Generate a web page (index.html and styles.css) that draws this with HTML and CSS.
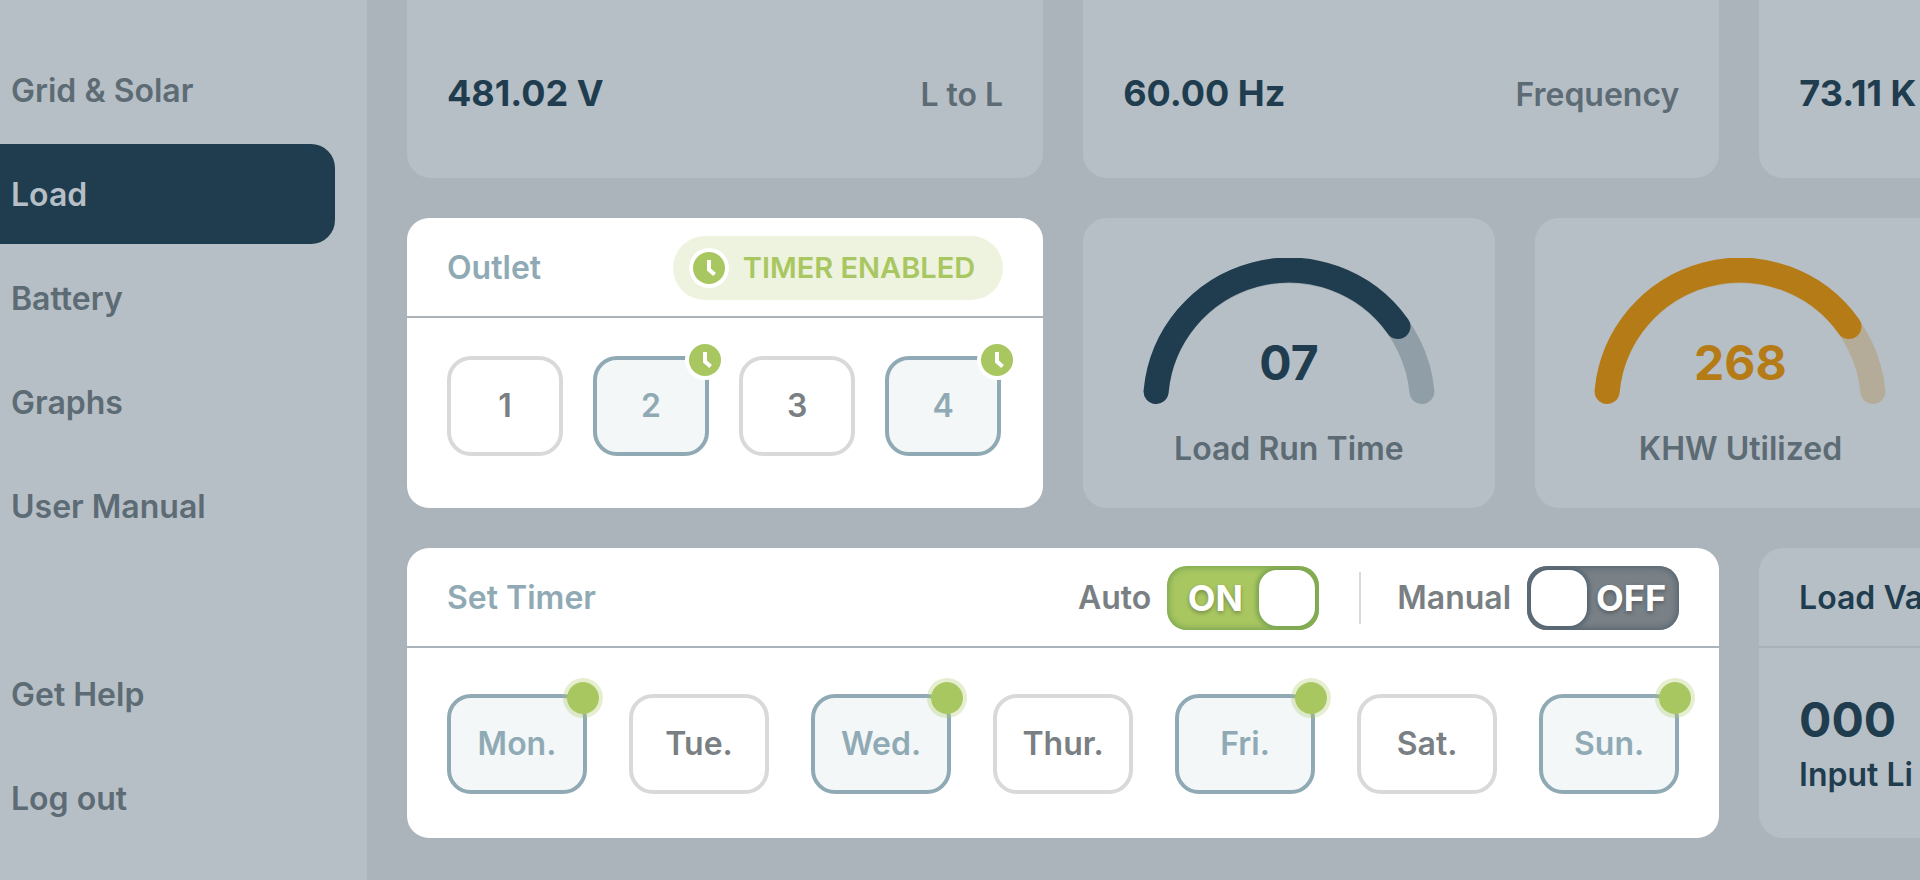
FILE: index.html
```html
<!DOCTYPE html>
<html lang="en">
<head>
    <meta charset="UTF-8">
    <meta name="viewport" content="width=device-width, initial-scale=1.0">
    <title>Load</title>
    <link rel="stylesheet" href="styles.css">
</head>
<body>
    <aside class="sidebar">
        <nav class="menu">
            <a class="menu-item" href="#">Grid &amp; Solar</a>
            <a class="menu-item active" href="#">Load</a>
            <a class="menu-item" href="#">Battery</a>
            <a class="menu-item" href="#">Graphs</a>
            <a class="menu-item" href="#">User Manual</a>
        </nav>
        <nav class="menu">
            <a class="menu-item" href="#">Get Help</a>
            <a class="menu-item" href="#">Log out</a>
        </nav>
    </aside>

    <main class="main">
        <div class="board">
            <!-- meters -->
            <div class="row">
                <section class="card meter">
                    <span class="meter-value">481.02 V</span>
                    <span class="meter-name">L to L</span>
                </section>
                <section class="card meter">
                    <span class="meter-value">60.00 Hz</span>
                    <span class="meter-name">Frequency</span>
                </section>
                <section class="card meter">
                    <span class="meter-value">73.11 K</span>
                </section>
            </div>

            <!-- outlets and gauges -->
            <div class="row">
                <section class="card focus">
                    <header class="card-header">
                        <h2 class="card-title">Outlet</h2>
                        <span class="pill">
                            <svg class="clock" viewBox="0 0 40 40">
                                <circle cx="20" cy="20" r="20" fill="#fff"/>
                                <circle cx="20" cy="20" r="16" fill="#a9c761"/>
                                <path d="M20 12v9.5l5.6 5" fill="none" stroke="#fff" stroke-width="4"/>
                            </svg>
                            TIMER ENABLED
                        </span>
                    </header>
                    <div class="outlets">
                        <button class="option" type="button">1</button>
                        <button class="option selected" type="button">2
                            <svg class="clock badge" viewBox="0 0 40 40">
                                <circle cx="20" cy="20" r="20" fill="#fff"/>
                                <circle cx="20" cy="20" r="16" fill="#a9c761"/>
                                <path d="M20 12v9.5l5.6 5" fill="none" stroke="#fff" stroke-width="4"/>
                            </svg>
                        </button>
                        <button class="option" type="button">3</button>
                        <button class="option selected" type="button">4
                            <svg class="clock badge" viewBox="0 0 40 40">
                                <circle cx="20" cy="20" r="20" fill="#fff"/>
                                <circle cx="20" cy="20" r="16" fill="#a9c761"/>
                                <path d="M20 12v9.5l5.6 5" fill="none" stroke="#fff" stroke-width="4"/>
                            </svg>
                        </button>
                    </div>
                </section>

                <section class="card gauge">
                    <div class="gauge-dial">
                        <svg class="gauge-arc" viewBox="0 0 292 146">
                            <path class="gauge-track" d="M13.1 133.5A133.5 133.5 0 0 1 278.9 133.5"/>
                            <path class="gauge-bar" d="M13.1 133.5A133.5 133.5 0 0 1 255 68.5"/>
                        </svg>
                        <span class="gauge-value">07</span>
                    </div>
                    <span class="gauge-name">Load Run Time</span>
                </section>

                <section class="card gauge orange">
                    <div class="gauge-dial">
                        <svg class="gauge-arc" viewBox="0 0 292 146">
                            <path class="gauge-track" d="M13.1 133.5A133.5 133.5 0 0 1 278.9 133.5"/>
                            <path class="gauge-bar" d="M13.1 133.5A133.5 133.5 0 0 1 255 68.5"/>
                        </svg>
                        <span class="gauge-value">268</span>
                    </div>
                    <span class="gauge-name">KHW Utilized</span>
                </section>
            </div>

            <!-- timer -->
            <div class="row">
                <section class="card focus wide">
                    <header class="card-header">
                        <h2 class="card-title">Set Timer</h2>
                        <div class="modes">
                            <label class="mode">Auto
                                <span class="switch on">
                                    <input class="switch-input" type="checkbox" checked>
                                    <span class="switch-text">ON</span>
                                    <span class="switch-knob"></span>
                                </span>
                            </label>
                            <span class="separator"></span>
                            <label class="mode">Manual
                                <span class="switch off">
                                    <input class="switch-input" type="checkbox">
                                    <span class="switch-knob"></span>
                                    <span class="switch-text">OFF</span>
                                </span>
                            </label>
                        </div>
                    </header>
                    <div class="days">
                        <button class="option selected" type="button">Mon.<span class="dot badge"></span></button>
                        <button class="option" type="button">Tue.</button>
                        <button class="option selected" type="button">Wed.<span class="dot badge"></span></button>
                        <button class="option" type="button">Thur.</button>
                        <button class="option selected" type="button">Fri.<span class="dot badge"></span></button>
                        <button class="option" type="button">Sat.</button>
                        <button class="option selected" type="button">Sun.<span class="dot badge"></span></button>
                    </div>
                </section>

                <section class="card values">
                    <header class="card-header">
                        <h2 class="card-title">Load Va</h2>
                    </header>
                    <div class="reading">
                        <span class="reading-value">000</span>
                        <span class="reading-name">Input Li</span>
                    </div>
                </section>
            </div>
        </div>
    </main>
</body>
</html>
```
FILE: styles.css
```css
* {
    box-sizing: border-box;
}

body {
    margin: 0;
    display: flex;
    min-height: 100vh;
    background-color: #abb4bb;
    font-family: Inter, "Liberation Sans", sans-serif;
    font-size: 32px;
    font-weight: 600;
    line-height: 40px;
    font-optical-sizing: none;
    color: #5d6b74;
}

/* sidebar */
.sidebar {
    flex: 0 0 367px;
    display: flex;
    flex-direction: column;
    justify-content: space-between;
    padding: 40px 32px 32px 0;
    background-color: #b6bfc6;
}

.menu {
    display: flex;
    flex-direction: column;
    gap: 4px;
}

.menu-item {
    display: flex;
    align-items: center;
    height: 100px;
    padding: 2px 0 0 11px;
    border-radius: 0 24px 24px 0;
    color: #5d6b74;
    text-decoration: none;
}

.menu-item.active {
    background-color: #1f3d4e;
    color: #b6bfc6;
}

/* the board runs on past the right edge of the window */
.main {
    flex: 1;
    min-width: 0;
    padding-left: 40px;
    overflow: hidden;
}

.board {
    width: calc(100% + 475px);
    display: flex;
    flex-direction: column;
    gap: 40px;
}

.row {
    display: flex;
    gap: 40px;
}

.card {
    flex: none;
    width: 32%;
    border-radius: 24px;
    background-color: #b6bfc6;
}

.card.focus {
    border-radius: 22px;
    background-color: #fff;
}

.card.wide {
    width: 66%;
}

.card-header {
    display: flex;
    align-items: center;
    justify-content: space-between;
    height: 100px;
    padding: 2px 40px 0;
    border-bottom: 2px solid #abb4bb;
}

.card-title {
    margin: 0;
    font-size: 32px;
    font-weight: 600;
    color: #90aab5;
}

/* meters */
.meter {
    display: flex;
    align-items: baseline;
    justify-content: space-between;
    padding: 73px 40px 63px;
    border-radius: 0 0 24px 24px;
}

.meter-value {
    font-size: 36px;
    font-weight: 700;
    color: #1f3d4e;
}

/* outlet card */
.pill {
    display: flex;
    align-items: center;
    gap: 14px;
    height: 64px;
    padding: 0 28px 0 16px;
    border-radius: 32px;
    background-color: #eef3df;
    color: #a9c761;
    font-size: 29px;
}

.clock {
    width: 40px;
    height: 40px;
}

.outlets {
    display: flex;
    gap: 30px;
    padding: 38px 42px 52px 40px;
}

.days {
    display: flex;
    gap: 42px;
    padding: 46px 40px 44px;
}

.option {
    position: relative;
    flex: 1;
    height: 100px;
    padding: 0;
    border: 4px solid #d9d9d9;
    border-radius: 24px;
    background-color: #fff;
    color: #797f83;
    font: inherit;
}

.option.selected {
    border-color: #90aab5;
    background-color: #f3f7f8;
    color: #90aab5;
}

.badge {
    position: absolute;
    top: -20px;
    right: -20px;
}

.dot {
    width: 40px;
    height: 40px;
    border: 4px solid rgba(169, 199, 97, 0.3);
    border-radius: 50%;
    background-color: #a9c761;
    background-clip: padding-box;
}

/* gauges */
.gauge {
    width: 20.7%;
    display: flex;
    flex-direction: column;
    align-items: center;
    gap: 25px;
    padding-top: 40px;
}

.gauge-dial {
    display: grid;
    justify-items: center;
}

.gauge-arc,
.gauge-value {
    grid-area: 1 / 1;
}

.gauge-arc {
    width: 292px;
    height: 146px;
}

.gauge-arc path {
    fill: none;
    stroke-width: 25px;
    stroke-linecap: round;
}

.gauge-track {
    stroke: #909ea7;
}

.gauge-bar {
    stroke: #1f3d4e;
}

.gauge-value {
    align-self: end;
    margin-bottom: 12px;
    font-size: 48px;
    font-weight: 700;
    line-height: 58px;
    color: #1f3d4e;
}

.orange .gauge-track {
    stroke: #b4ac98;
}

.orange .gauge-bar {
    stroke: #b57b17;
}

.orange .gauge-value {
    color: #b57b17;
}

/* timer switches */
.modes,
.mode {
    display: flex;
    align-items: center;
}

.mode {
    gap: 16px;
    color: #797f83;
}

.separator {
    width: 2px;
    height: 52px;
    margin: 0 36px 0 40px;
    background-color: #d9d9d9;
}

.switch {
    position: relative;
    display: flex;
    align-items: center;
    width: 152px;
    height: 64px;
    padding: 4px;
    border-radius: 20px;
    overflow: hidden;
}

.switch.on {
    background-color: #a9c761;
    box-shadow: inset 0 0 6px 2px #7aa550;
}

.switch.off {
    background-color: #798086;
    box-shadow: inset 0 0 6px 2px #566571;
}

.switch-input {
    position: absolute;
    inset: 0;
    width: 100%;
    height: 100%;
    margin: 0;
    opacity: 0;
}

.switch-text {
    flex: 1;
    text-align: center;
    font-size: 36px;
    font-weight: 700;
    color: #fff;
    text-shadow: 0 2px 4px rgba(0, 0, 0, 0.3);
}

.switch-knob {
    width: 56px;
    height: 56px;
    border-radius: 18px;
    background-color: #fff;
}

.on .switch-knob {
    box-shadow: 0 0 4px 3px #7aa550;
}

.off .switch-knob {
    box-shadow: 0 0 4px 3px #566571;
}

/* load values */
.values .card-title {
    color: #1f3d4e;
}

.values .card-header {
    border-color: #a9b2b9;
}

.reading {
    display: flex;
    flex-direction: column;
    padding: 43px 40px 0;
    color: #1f3d4e;
}

.reading-value {
    font-size: 48px;
    font-weight: 700;
    line-height: 58px;
}

.reading-name {
    line-height: 52px;
}
```
